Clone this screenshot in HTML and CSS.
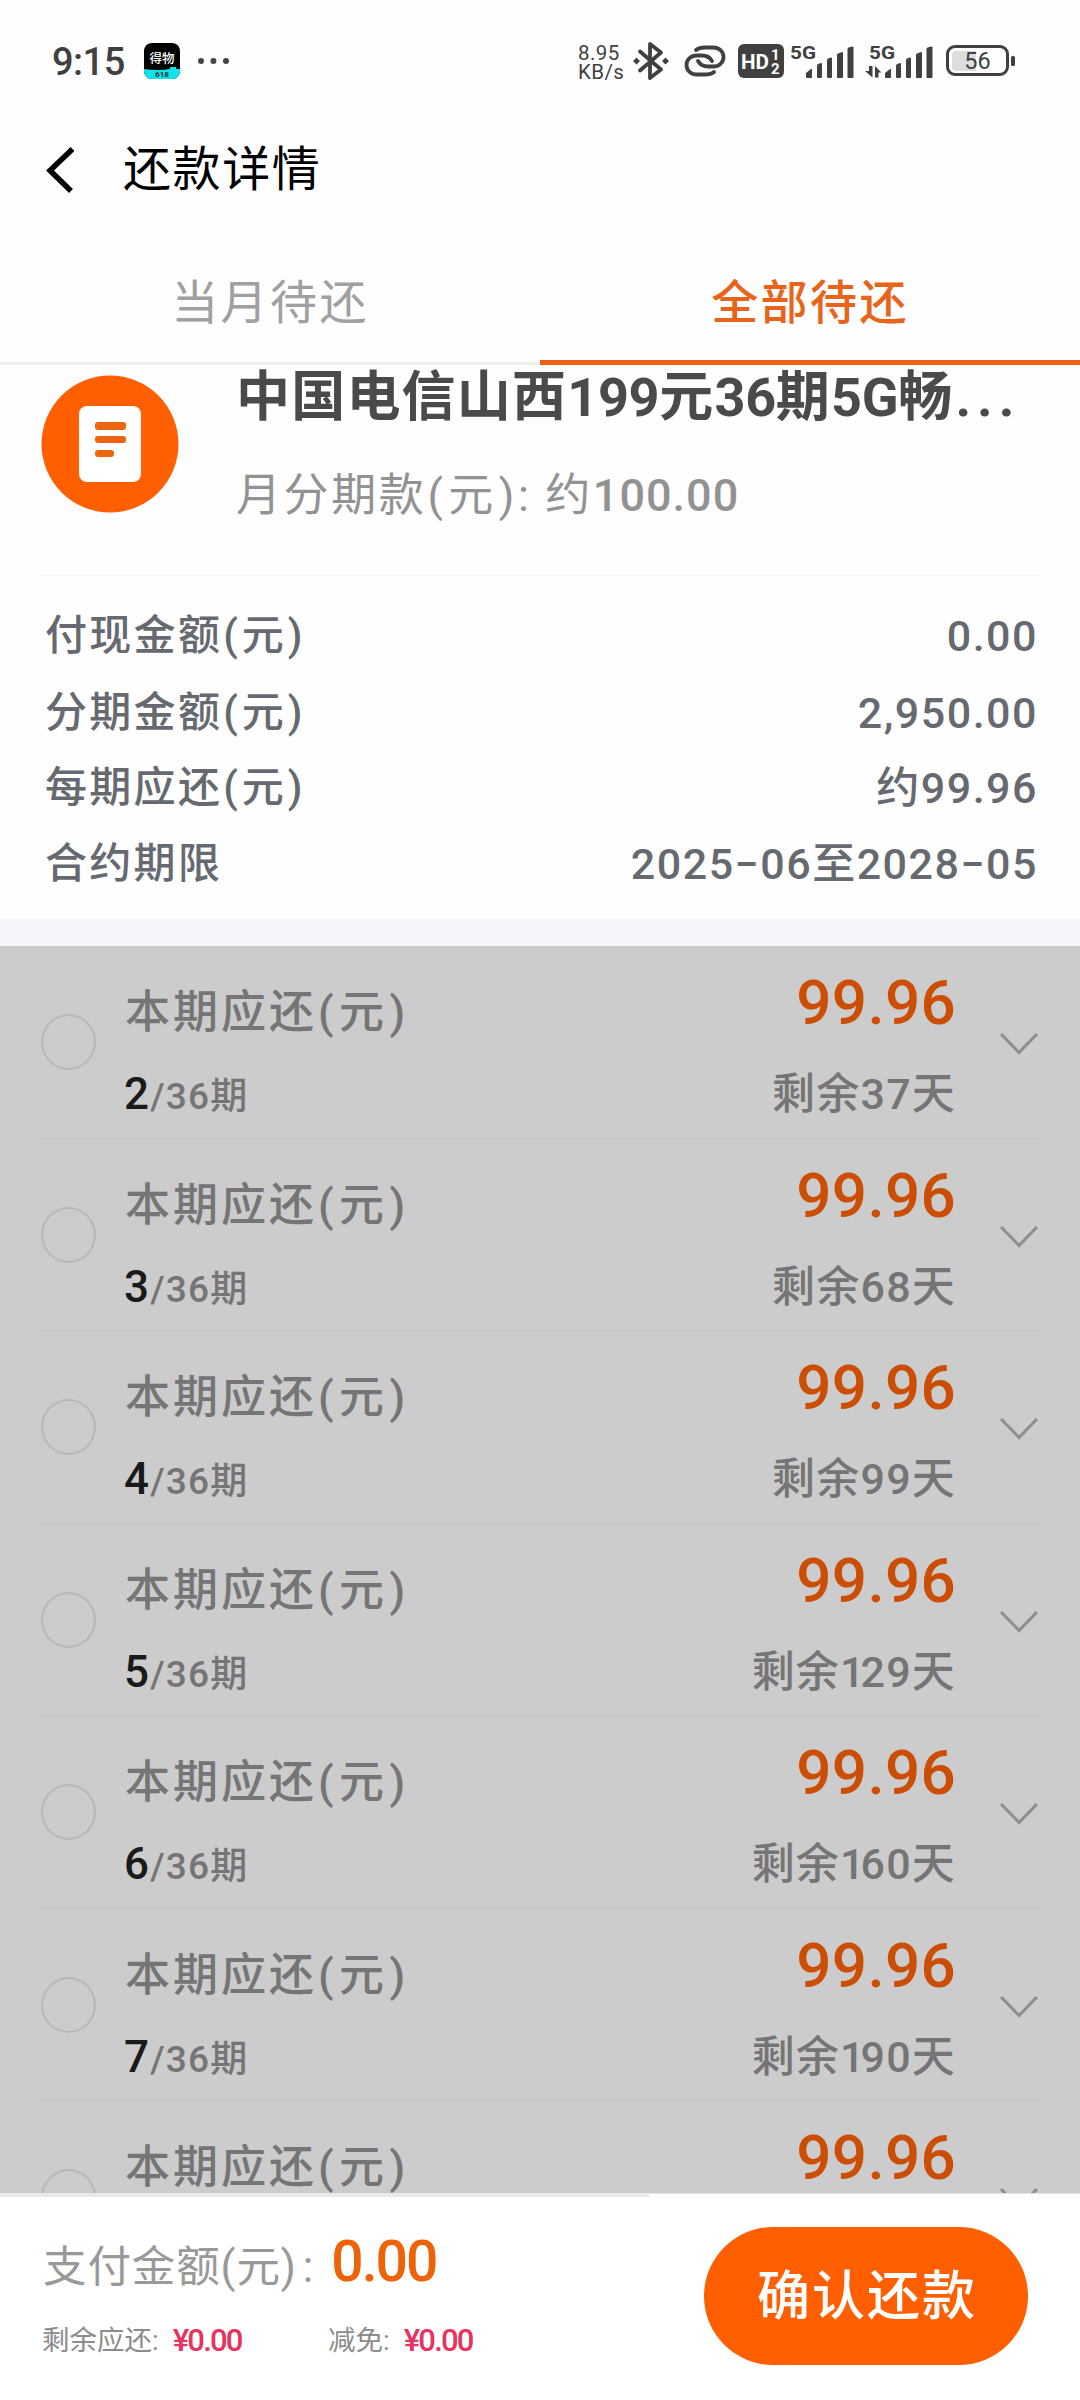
FILE: index.html
```html
<!DOCTYPE html>
<html lang="zh-CN">
<head>
<meta charset="utf-8">
<title>还款详情</title>
<link rel="stylesheet" href="styles.css">
</head>
<body>
<div class="screen">
  <div class="status">
    <span class="clock">9:15</span>
    <svg class="app" width="36" height="36" viewBox="0 0 36 36">
      <defs><clipPath id="app-clip"><rect width="36" height="36" rx="8"/></clipPath></defs>
      <g clip-path="url(#app-clip)"><rect width="36" height="36" fill="#000"/><path d="M0 26Q14 28 26 26V24h6v2h4v10H0z" fill="#12e3e8"/></g>
      <text x="18" y="19.500" font-size="12.500" font-weight="500" fill="#fff" text-anchor="middle">得物</text>
      <text x="18" y="34" font-size="8" font-weight="700" fill="#033" text-anchor="middle">618</text>
    </svg>
    <svg class="dots" width="32" height="8" viewBox="0 0 32 8" fill="#444"><circle cx="4" cy="4" r="3"/><circle cx="16.400" cy="4" r="3"/><circle cx="29" cy="4" r="3"/></svg>
    <span class="speed"><span>8.95</span><span>KB/s</span></span>
    <svg class="bt" width="36" height="40" viewBox="0 0 36 40" fill="none" stroke="#404040" stroke-width="3.800" stroke-linejoin="round" stroke-linecap="round"><path d="M7 10.500L28 28.500L17 37V3L28 11.500L7 29.500"/><g fill="#404040" stroke="none"><path d="M0 20l3.500-3.500L7 20l-3.500 3.500zM29 20l3.500-3.500L36 20l-3.500 3.500z"/></g></svg>
    <svg class="link" width="42" height="34" viewBox="0 0 42 34" fill="none" stroke="#404040" stroke-width="3.800" stroke-linecap="round"><path d="M12 6C15 3.500 18 3.500 21 3.500H29C35 3.500 39.500 7.500 39.500 13S35 22.500 29 22.500H24C19 22.500 16 20.500 14 17"/><path d="M30 28C27 30.500 24 30.500 21 30.500H13C7 30.500 2.500 26.500 2.500 21S7 11.500 13 11.500H18C23 11.500 26 13.500 28 17"/></svg>
    <svg class="hd" width="46" height="34" viewBox="0 0 46 34"><rect width="46" height="34" rx="6" fill="#404040"/><g fill="#fff" font-weight="700"><text x="3" y="24.500" font-size="20.500" textLength="28" lengthAdjust="spacingAndGlyphs">HD</text><text x="33" y="16" font-size="15">1</text><text x="33" y="30" font-size="15">2</text></g></svg>
    <svg class="sig one" width="64" height="38" viewBox="0 -4 64 38" fill="#404040"><text x="0" y="15" font-size="19" font-weight="700" textLength="26" lengthAdjust="spacingAndGlyphs">5G</text><path d="M16 33v-4l5-4q1-1 1 1v7q0 1-1 1h-4q-1 0-1-1zM27 33V22q0-1 1-2l3-1q1 0 1 1v13q0 1-1 1h-3q-1 0-1-1zM37 33V16q0-1 1-1.500l3-1q1 0 1 1V33q0 1-1 1h-3q-1 0-1-1zM47 33V11q0-1 1-1.500l4-1.500q1 0 1 1v24q0 1-1 1h-4q-1 0-1-1zM57.500 33V5q0-1 1-1.500l4-1q1 0 1 1V33q0 1-1 1h-4q-1 0-1-1z"/></svg>
    <svg class="sig two" width="68" height="38" viewBox="-4 -4 68 38" fill="#404040"><text x="0" y="15" font-size="19" font-weight="700" textLength="26" lengthAdjust="spacingAndGlyphs">5G</text><path d="M16 33v-4l5-4q1-1 1 1v7q0 1-1 1h-4q-1 0-1-1zM27 33V22q0-1 1-2l3-1q1 0 1 1v13q0 1-1 1h-3q-1 0-1-1zM37 33V16q0-1 1-1.500l3-1q1 0 1 1V33q0 1-1 1h-3q-1 0-1-1zM47 33V11q0-1 1-1.500l4-1.500q1 0 1 1v24q0 1-1 1h-4q-1 0-1-1zM57.500 33V5q0-1 1-1.500l4-1q1 0 1 1V33q0 1-1 1h-4q-1 0-1-1zM0 22h3.500v11.500L-4 27h4zM6 33.500V22l6.500 6.500H9.500v5z"/></svg>
    <svg class="bat" width="70" height="32" viewBox="0 0 70 32"><rect x="1.500" y="1.500" width="60" height="28" rx="7.500" fill="none" stroke="#404040" stroke-width="3"/><path d="M10 6H30V26H10q-4 0-4-4V10q0-4 4-4z" fill="#ddd"/><rect x="65" y="11" width="4" height="10" rx="1.500" fill="#404040"/><text x="31.500" y="24" font-size="23.500" text-anchor="middle" fill="#404040">56</text></svg>
  </div>

  <div class="header">
    <svg class="back" width="32" height="46" viewBox="0 0 32 46" fill="none" stroke="#000" stroke-width="5.500"><path d="M27.500 2L5 23.500L26 44"/></svg>
    <h1>还款详情</h1>
  </div>

  <div class="tabs">
    <div class="tab">当月待还</div>
    <div class="tab active">全部待还</div>
  </div>

  <div class="product">
    <svg class="doc" width="138" height="138" viewBox="0 0 138 138"><circle cx="69" cy="69" r="68.500" fill="#ff5f00"/><rect x="38" y="31" width="62" height="76" rx="8" fill="#fff"/><g fill="#f0640f"><rect x="54" y="47" width="31" height="8" rx="3"/><rect x="54" y="61" width="31" height="7" rx="3"/><rect x="54" y="75" width="19" height="7" rx="3"/></g></svg>
    <div class="info">
      <div class="name">中国电信山西<span class="n">199</span>元<span class="n">36</span>期<span class="n">5G</span>畅<span class="more">...</span></div>
      <div class="monthly">月分期款<span class="unit">(元)</span><span class="colon">:</span> 约<span class="n">100.00</span></div>
    </div>
  </div>

  <div class="facts">
    <div class="fact"><span>付现金额<span class="unit">(元)</span></span><span class="v">0.00</span></div>
    <div class="fact"><span>分期金额<span class="unit">(元)</span></span><span class="v">2,950.00</span></div>
    <div class="fact"><span>每期应还<span class="unit">(元)</span></span><span class="v">约99.96</span></div>
    <div class="fact"><span>合约期限</span><span class="v">2025−06至2028−05</span></div>
  </div>
  <div class="band"></div>

  <div class="list">
    <div class="row"><span class="radio"></span><div class="left"><div class="label">本期应还<span class="unit">(元)</span></div><div class="term"><b>2</b>/36期</div></div><div class="right"><div class="amount">99.96</div><div class="remain">剩余37天</div></div><svg class="chev" width="38" height="22" viewBox="0 0 38 22"><path d="M1 1L19 19.500L37 1"/></svg></div>
    <div class="row"><span class="radio"></span><div class="left"><div class="label">本期应还<span class="unit">(元)</span></div><div class="term"><b>3</b>/36期</div></div><div class="right"><div class="amount">99.96</div><div class="remain">剩余68天</div></div><svg class="chev" width="38" height="22" viewBox="0 0 38 22"><path d="M1 1L19 19.500L37 1"/></svg></div>
    <div class="row"><span class="radio"></span><div class="left"><div class="label">本期应还<span class="unit">(元)</span></div><div class="term"><b>4</b>/36期</div></div><div class="right"><div class="amount">99.96</div><div class="remain">剩余99天</div></div><svg class="chev" width="38" height="22" viewBox="0 0 38 22"><path d="M1 1L19 19.500L37 1"/></svg></div>
    <div class="row"><span class="radio"></span><div class="left"><div class="label">本期应还<span class="unit">(元)</span></div><div class="term"><b>5</b>/36期</div></div><div class="right"><div class="amount">99.96</div><div class="remain">剩余<span class="one-lead">1</span>29天</div></div><svg class="chev" width="38" height="22" viewBox="0 0 38 22"><path d="M1 1L19 19.500L37 1"/></svg></div>
    <div class="row"><span class="radio"></span><div class="left"><div class="label">本期应还<span class="unit">(元)</span></div><div class="term"><b>6</b>/36期</div></div><div class="right"><div class="amount">99.96</div><div class="remain">剩余<span class="one-lead">1</span>60天</div></div><svg class="chev" width="38" height="22" viewBox="0 0 38 22"><path d="M1 1L19 19.500L37 1"/></svg></div>
    <div class="row"><span class="radio"></span><div class="left"><div class="label">本期应还<span class="unit">(元)</span></div><div class="term"><b>7</b>/36期</div></div><div class="right"><div class="amount">99.96</div><div class="remain">剩余<span class="one-lead">1</span>90天</div></div><svg class="chev" width="38" height="22" viewBox="0 0 38 22"><path d="M1 1L19 19.500L37 1"/></svg></div>
    <div class="row"><span class="radio"></span><div class="left"><div class="label">本期应还<span class="unit">(元)</span></div></div><div class="right"><div class="amount">99.96</div></div><svg class="chev" width="38" height="22" viewBox="0 0 38 22"><path d="M1 1L19 19.500L37 1"/></svg></div>
  </div>

  <div class="footer">
    <div class="summary">
      <div class="pay"><span>支付金额(元)<span class="colon">:</span></span><span class="total">0.00</span></div>
      <div class="extras"><div class="extra"><span>剩余应还:</span><em>¥0.00</em></div><div class="extra"><span>减免:</span><em>¥0.00</em></div></div>
    </div>
    <div class="action"><div class="button">确认还款</div></div>
  </div>
</div>
</body>
</html>
```
FILE: styles.css
```css
* { box-sizing: border-box; }
body { margin: 0; background: #fff; font-family: Roboto, "Noto Sans CJK SC", sans-serif; }
svg { display: block; flex: none; }
.screen { width: 1080px; height: 2400px; overflow: hidden; display: flex; flex-direction: column; background: #fefefe; white-space: nowrap; }

.status { height: 122px; display: flex; align-items: center; padding-left: 52px; color: #404040; flex: none; }
.clock { width: 92px; font-size: 38px; line-height: 50px; letter-spacing: -0.5px; font-weight: 500; padding-top: 2px; }
.dots { margin-left: 17px; }
.speed { display: flex; flex-direction: column; width: 54px; margin-left: 349px; margin-right: 1px; font-size: 20.500px; line-height: 19px; letter-spacing: .4px; padding-top: 3px; }
.link { margin-left: 15px; }
.hd { margin-left: 12px; }
.sig { margin-top: -4px; }
.one { margin-left: 6px; }
.two { margin-left: 11px; }
.bat { margin-left: 13px; }

.header { height: 118px; display: flex; align-items: flex-start; padding: 25px 0 0 45px; flex: none; }
.header h1 { margin: -7px 0 0 46px; font-size: 48px; line-height: 60px; font-weight: 400; letter-spacing: 1.6px; color: #000; }

.tabs { height: 125px; display: flex; flex: none; }
.tab { flex: 1; text-align: center; font-size: 47px; line-height: 124px; font-weight: 400; letter-spacing: 2.4px; color: #a0a0a0; border-bottom: 3px solid #eee; padding-top: 1px; }
.tab.active { font-weight: 500; color: #e8641a; border-bottom: 5px solid #ea6216; }

.product { display: flex; margin: 0 40px 0 41px; height: 211px; border-bottom: 1px solid #f5f5f5; padding-top: 10px; flex: none; }
.info { margin-left: 57px; }
.name { font-size: 54px; font-weight: 700; color: #4a4a4a; line-height: 60px; letter-spacing: 1.2px; margin-top: -7px; }
.name .n { letter-spacing: -.3px; }
.more { letter-spacing: 6px; margin-left: 2px; }
.monthly { font-size: 45px; line-height: 60px; color: #929292; letter-spacing: 2.6px; margin-top: 38px; }
.monthly .n { letter-spacing: 1px; font-weight: 500; }
.monthly .colon { margin-left: -2px; }
.unit { letter-spacing: 5.500px; margin-left: 1px; }

.facts { height: 343px; padding: 22px 44px 0 45px; display: grid; grid-template-rows: 77px 75px 76px 77px; flex: none; color: #666a70; font-size: 42px; line-height: 76px; font-weight: 500; letter-spacing: 2.3px; }
.facts .unit { letter-spacing: 4px; }
.fact { display: flex; justify-content: space-between; }
.v { font-size: 43px; letter-spacing: 1.5px; margin-right: -2px; }
.band { height: 27px; background: #f4f5fa; flex: none; }

.list { height: 1247px; overflow: hidden; background: #ccc; flex: none; }
.row { height: 192.500px; margin: 0 40px; border-bottom: 1px solid #c2c2c2; display: flex; align-items: flex-start; color: #757575; }
.radio { width: 55px; height: 56px; border: 2px solid #b8b8b8; border-radius: 50%; margin: 68px 0 0 1px; flex: none; }
.left { margin: 37px 0 0 29px; }
.label { font-size: 45px; font-weight: 500; line-height: 60px; letter-spacing: 3px; }
.term { font-size: 37px; font-weight: 500; line-height: 60px; margin-top: 21px; letter-spacing: 1.2px; }
.term b { font-size: 44px; font-weight: 500; color: #1a1a1a; margin-left: -1px; }
.right { margin: 22px 0 0 auto; text-align: right; }
.amount { font-size: 62px; font-weight: 500; line-height: 70px; color: #cb4e04; letter-spacing: .3px; margin-right: -1px; }
.remain { font-size: 43px; font-weight: 500; line-height: 60px; margin-top: 26px; letter-spacing: 1.2px; margin-right: -1px; }
.one-lead { letter-spacing: -4px; }
.chev { margin: 87px 2px 0 45px; fill: none; stroke: #8e8e8e; stroke-width: 3px; }

.footer { flex: 1; display: flex; background: #fff; }
.summary { width: 649px; border-top: 4px solid #eaeaea; padding-left: 43px; }
.action { flex: 1; border-top: 1px solid #e6e6e6; padding: 33px 0 0 55px; }
.pay { display: flex; align-items: center; height: 60px; margin-top: 36px; font-size: 43.500px; color: #999; letter-spacing: .9px; }
.colon { margin-left: 6px; }
.total { margin: -3px 0 0 17px; font-size: 57px; font-weight: 500; color: #ee6208; letter-spacing: -2px; }
.extras { display: flex; margin-top: 28px; margin-left: -1px; font-size: 27.500px; line-height: 40px; color: #8c8c8c; }
.extra { width: 286px; display: flex; }
.extra em { margin-left: 14px; font-style: normal; font-weight: 500; font-size: 31px; color: #e8325f; letter-spacing: -1.8px; }
.button { width: 324px; height: 138px; border-radius: 69px; background: #ff5f00; color: #fff; text-align: center; font-size: 53px; font-weight: 500; line-height: 141px; letter-spacing: 2px; padding-left: 2px; }
```
